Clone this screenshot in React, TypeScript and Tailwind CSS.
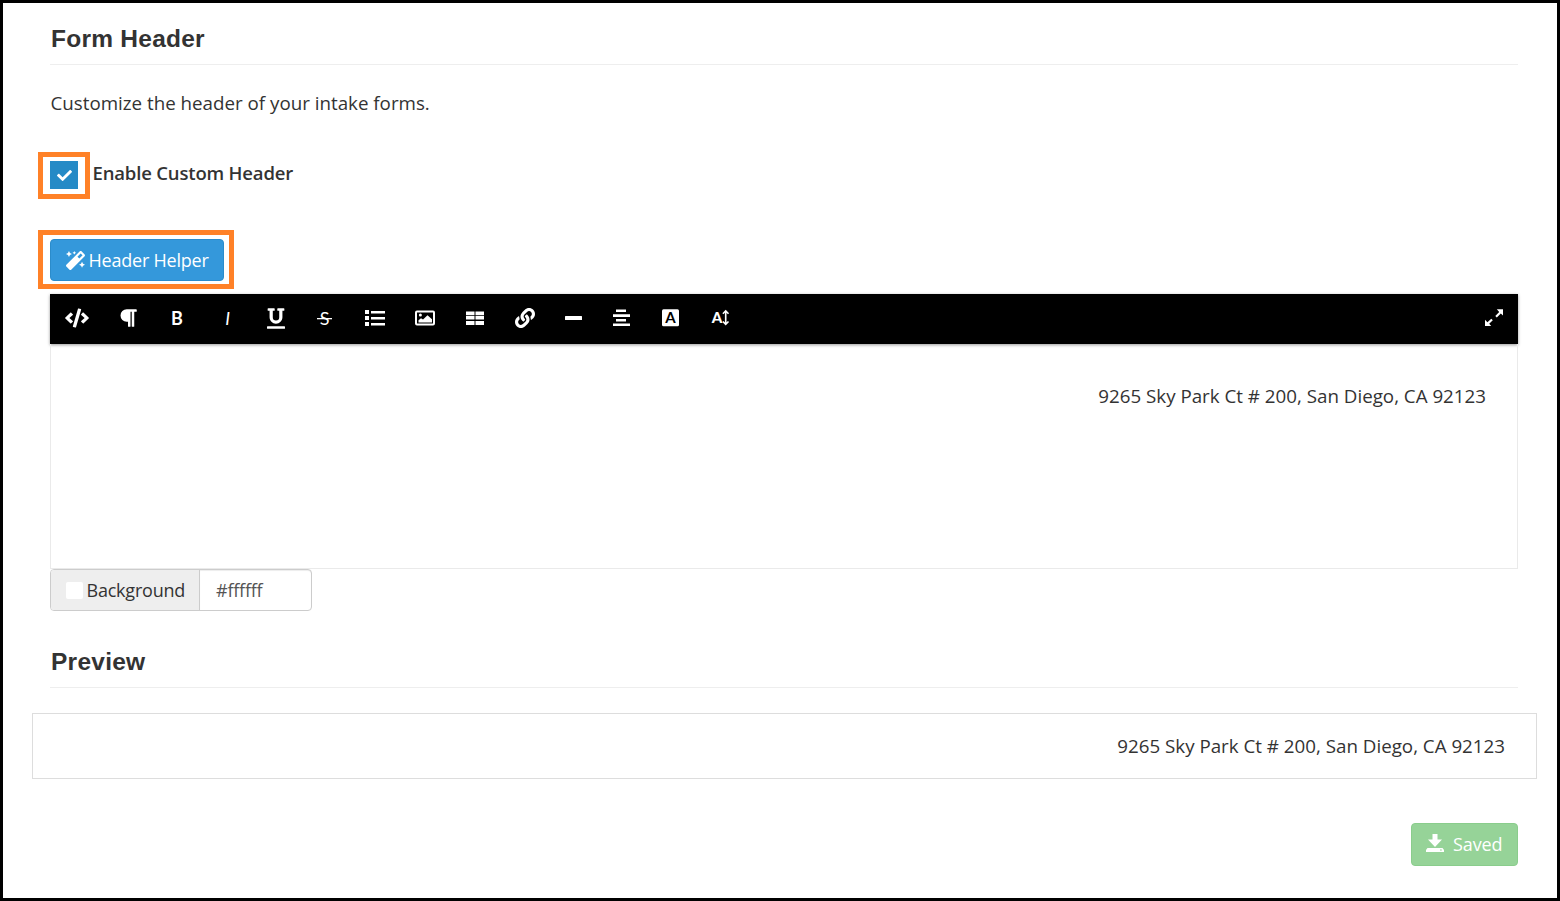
import type { ReactNode } from "react";
import { FaCode, FaLink, FaParagraph, FaUnderline, FaCheck, FaMagic } from "react-icons/fa";

const ADDRESS = "9265 Sky Park Ct # 200, San Diego, CA 92123";

function Tool({ className, label, children }: { className: string; label: string; children: ReactNode }) {
  return (
    <button aria-label={label} className={`flex h-[26px] w-[26px] shrink-0 items-center justify-center text-white ${className}`}>
      {children}
    </button>
  );
}

function Icon({ children }: { children: ReactNode }) {
  return (
    <svg viewBox="0 0 26 26" className="h-[26px] w-[26px]" fill="currentColor">
      {children}
    </svg>
  );
}

function Toolbar() {
  return (
    <div className="flex h-[50px] items-start bg-black pt-[11px] shadow-[0_1px_3px_rgba(0,0,0,0.4)]">
      <Tool className="ml-[14px]" label="Code"><FaCode className="h-5 w-6" /></Tool>
      <Tool className="ml-[25px]" label="Format"><FaParagraph className="h-5 w-[18px]" /></Tool>
      <Tool className="ml-[23px]" label="Bold">
        <Icon><text x="7" y="20" className="font-['Lato'] text-[18px] font-bold">B</text></Icon>
      </Tool>
      <Tool className="ml-[25px]" label="Italic">
        <Icon><text x="10.2" y="20" className="font-['Lato'] text-[18px] italic">I</text></Icon>
      </Tool>
      <Tool className="ml-[22px]" label="Underline"><FaUnderline className="h-[21px] w-[18px]" /></Tool>
      <Tool className="ml-[23px]" label="Strikethrough">
        <Icon>
          <text x="7.8" y="20" className="font-['Lato'] text-[18px]">S</text>
          <rect x="5" y="13" width="15" height="1.3" />
        </Icon>
      </Tool>
      <Tool className="ml-[24px]" label="Lists">
        <Icon>
          <path d="M3 5h4v4H3zM3 11h4v4H3zM3 17h4v4H3zM9 6h14v2.5H9zM9 12h14v2.5H9zM9 18h14v2.5H9z" />
        </Icon>
      </Tool>
      <Tool className="ml-[24px]" label="Image">
        <Icon>
          <rect x="4" y="6.5" width="18" height="13" rx="1" fill="none" stroke="currentColor" strokeWidth="2" />
          <path d="M6.5 17.5v-2.2l2.5-2 2 1.2 4.5-4.2 4.5 4v3.2z" />
          <circle cx="8.4" cy="10" r="1.5" />
        </Icon>
      </Tool>
      <Tool className="ml-[24px]" label="Table">
        <Icon><path d="M4 6.5h8.500v3.700H4zM13.500 6.500H22v3.700h-8.500zM4 11h8.500v3.500H4zM13.500 11H22v3.500h-8.500zM4 16h8.500v4H4zM13.500 16H22v4h-8.500z" /></Icon>
      </Tool>
      <Tool className="ml-[24px]" label="Link"><FaLink className="h-5 w-5" /></Tool>
      <Tool className="ml-[22px]" label="Line">
        <Icon><rect x="5" y="11" width="17" height="4" rx="0.500" /></Icon>
      </Tool>
      <Tool className="ml-[22px]" label="Align">
        <Icon><path d="M8 4.500h10V7H8zM5 9.200h17V12H5zM8 14h10v2.500H8zM5 18.500h17V21H5z" /></Icon>
      </Tool>
      <Tool className="ml-[23px]" label="Text color">
        <Icon>
          <rect x="5" y="4.200" width="17" height="17" rx="1.500" />
          <text x="13.400" y="18" textAnchor="middle" fill="#000" className="font-['Lato'] text-[15px] font-bold">A</text>
        </Icon>
      </Tool>
      <Tool className="ml-[24px]" label="Font size">
        <Icon>
          <text x="4.800" y="18" className="font-['Lato'] text-[15px] font-black">A</text>
          <path d="M18.700 6.500v12.500M15.900 8.700l2.800-2.900 2.800 2.900M15.900 16.500l2.800 2.900 2.800-2.900" fill="none" stroke="currentColor" strokeWidth="1.600" />
        </Icon>
      </Tool>
      <Tool className="ml-auto mr-[11px]" label="Fullscreen">
        <Icon>
          <path d="M15.800 4.200H22v6.300l-2.200-2-4 4-1.500-1.500 3.900-4zM4 14.800V21h6.200l-2-2.200 3.600-3.600-1.500-1.500-3.900 3.600z" />
        </Icon>
      </Tool>
    </div>
  );
}

export default function App() {
  return (
    <div className="flex h-[901px] w-[1560px] flex-col overflow-hidden border-[3px] border-black bg-white pl-[47px] pr-[39px] font-['Open_Sans',sans-serif] text-[18.75px] leading-[26px] text-[#333]">
      <h2 className="flex h-[62px] items-center border-b border-[#eee] pl-px pt-[10px] font-['Liberation_Sans',sans-serif] text-[24.5px] font-bold tracking-[0.25px]">
        Form Header
      </h2>
      <p className="mt-[25px] pl-[0.5px]">Customize the header of your intake forms.</p>

      <div className="mt-[45px] flex h-7 items-center">
        <div className="relative flex h-7 w-7 items-center justify-center bg-[#258ac6] text-white">
          <FaCheck className="h-[15px] w-[15px]" />
          <div className="absolute -bottom-[10px] -left-3 -right-3 -top-[9px] border-[5px] border-[#ff8127]" />
        </div>
        <span className="-mt-[4px] ml-[14.5px] text-[18.5px] font-semibold tracking-[-0.17px]">Enable Custom Header</span>
      </div>

      <button className="relative mt-[50px] flex h-[42px] w-[174px] items-center rounded-[4px] border border-[#2b8ccb] bg-[#3498db] pl-[15px] text-[18px] tracking-[-0.22px] text-white">
        <FaMagic className="mr-[3.5px] h-[19px] w-[19px]" />
        Header Helper
        <span className="absolute -bottom-[9px] -left-[13px] -right-[11px] -top-[10px] border-[5px] border-[#ff8127]" />
      </button>

      <div className="mt-[13px]">
        <Toolbar />
        <div className="h-[225px] border border-t-0 border-[#eaeaea] px-[31px] pt-[39px] text-right">{ADDRESS}</div>
      </div>

      <div className="flex h-[42px] w-[262px] shrink-0 rounded-[4px] border border-[#ccc] text-[18px] tracking-[-0.22px]">
        <div className="flex w-[149px] items-center rounded-l-[3px] border-r border-[#ccc] bg-[#eee] pl-[15px]">
          <span className="mr-[3.5px] h-[17px] w-[17px] rounded-[2px] bg-white" />
          Background
        </div>
        <div className="flex flex-1 items-center rounded-r-[3px] pl-4 text-[#555] shadow-[inset_0_1px_1px_rgba(0,0,0,0.075)]">#ffffff</div>
      </div>

      <h2 className="mt-[27px] flex h-[50px] items-center border-b border-[#eee] pb-[2px] pl-px font-['Liberation_Sans',sans-serif] text-[24.5px] font-bold tracking-[0.25px]">
        Preview
      </h2>
      <div className="-ml-[18px] -mr-[19px] mt-[25px] flex h-[66px] shrink-0 items-center justify-end border border-[#ddd] pr-[31px]">
        {ADDRESS}
      </div>

      <button className="mt-[44px] flex h-[43px] w-[107px] shrink-0 items-center self-end rounded-[4px] border border-[#8acd8c] bg-[#96d398] pb-px pl-[14px] text-[18px] tracking-[-0.1px] text-white">
        <svg viewBox="0 0 18 18" className="mb-[2px] mr-[9px] h-[18px] w-[18px]" fill="currentColor">
          <path d="M6.500 0h5v5.500H16L9 13 2 5.500h4.500zM1.500 14h15l1.500 2v2H0v-2z" />
          <rect x="14" y="15.500" width="1.800" height="1" fill="#96d398" />
        </svg>
        Saved
      </button>
    </div>
  );
}
